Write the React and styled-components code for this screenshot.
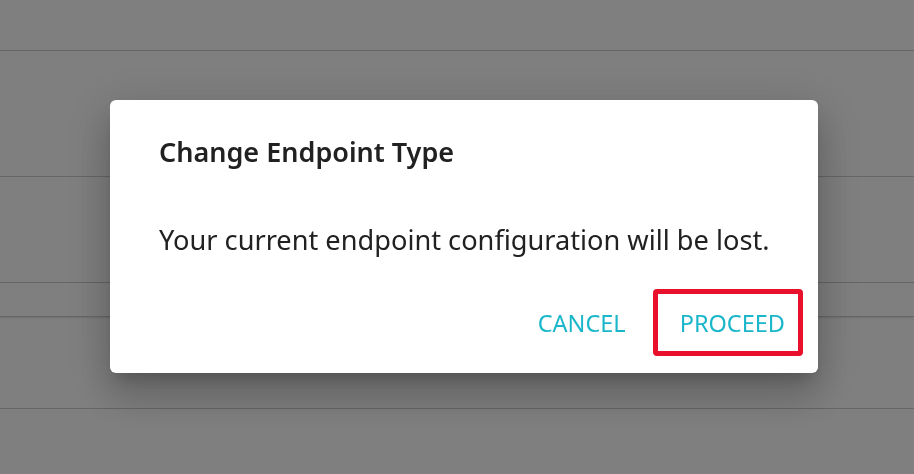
import React from "react";
import styled, { createGlobalStyle } from "styled-components";

const Global = createGlobalStyle`
  html, body { margin: 0; padding: 0; background: #ffffff; }
  body { font-family: "Noto Sans", "Open Sans", sans-serif; overflow: hidden; }
`;

const Page = styled.div`
  display: flex;
  flex-direction: column;
  height: 474px;
  background: #ffffff;
`;

const Row = styled.div`
  flex: 0 0 auto;
  height: ${(p) => p.$h}px;
  border-bottom: 1px solid #cccccc;
  box-shadow: ${(p) => (p.$raised ? "0 1px 2px rgba(0,0,0,0.12)" : "none")};
`;

const Overlay = styled.div`
  position: fixed;
  inset: 0;
  background: rgba(0, 0, 0, 0.5);
  display: flex;
  align-items: flex-start;
  justify-content: center;
  padding: 100px 0 0 14px;
`;

const Dialog = styled.div`
  width: 708px;
  height: 273px;
  box-sizing: border-box;
  background: #ffffff;
  border-radius: 6px;
  box-shadow: 0px 11px 15px -7px rgba(0, 0, 0, 0.2),
    0px 24px 38px 3px rgba(0, 0, 0, 0.14),
    0px 9px 46px 8px rgba(0, 0, 0, 0.12);
  display: flex;
  flex-direction: column;
  padding: 34px 15px 0 49px;
  color: #212121;
`;

const Title = styled.h2`
  margin: 0;
  font-size: 27px;
  line-height: 36px;
  font-weight: 600;
`;

const Body = styled.p`
  margin: 52px 0 0;
  font-size: 27.2px;
  line-height: 36px;
  font-weight: 400;
`;

const Actions = styled.div`
  display: flex;
  justify-content: flex-end;
  align-items: center;
  gap: 27px;
  margin-top: 31px;
`;

const TextButton = styled.button`
  border: none;
  background: transparent;
  padding: 0;
  font-family: inherit;
  font-size: 23.5px;
  line-height: 32px;
  color: #1ab7cb;
  text-transform: uppercase;
  cursor: pointer;
`;

const Highlight = styled.div`
  border: 5px solid #e8102a;
  border-radius: 4px;
  padding: 13px 13px 12px 22px;
  display: flex;
`;

export default function App() {
  const rows = [50, 125, 105, 33, 91];
  return (
    <>
      <Global />
      <Page>
        {rows.map((h, i) => (
          <Row key={i} $h={h} $raised={i === 3} />
        ))}
      </Page>
      <Overlay>
        <Dialog role="dialog">
          <Title>Change Endpoint Type</Title>
          <Body>Your current endpoint configuration will be lost.</Body>
          <Actions>
            <TextButton>Cancel</TextButton>
            <Highlight>
              <TextButton>Proceed</TextButton>
            </Highlight>
          </Actions>
        </Dialog>
      </Overlay>
    </>
  );
}
